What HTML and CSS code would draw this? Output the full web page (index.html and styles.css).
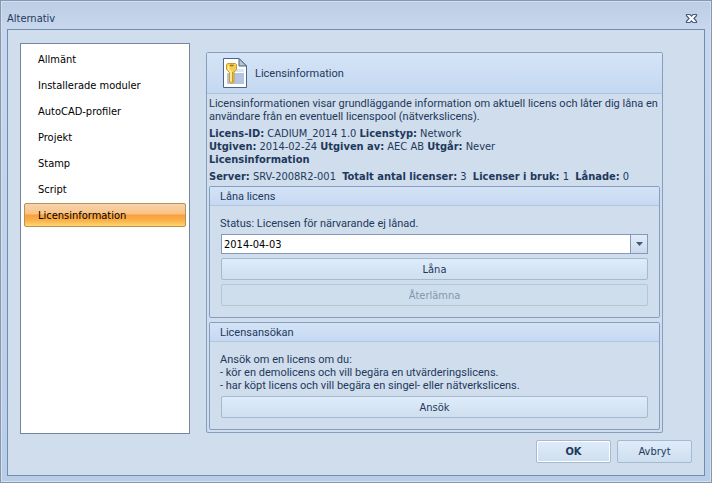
FILE: index.html
```html
<!DOCTYPE html>
<html lang="sv">
<head>
<meta charset="utf-8">
<title>Alternativ</title>
<link rel="stylesheet" href="styles.css">
</head>
<body>
<div class="window">
  <header class="titlebar">
    <h1 class="title">Alternativ</h1>
    <button class="close" type="button" aria-label="Stäng">
      <svg width="13" height="11" viewBox="0 0 13 11" aria-hidden="true">
        <path d="M1.500 1.500h3.500l1.500 1.700 1.500-1.700h3.500v1.200L8.900 5.500l2.600 2.800v1.200H8L6.500 7.800 5 9.500H1.500V8.300l2.600-2.800-2.600-2.800z" fill="#fff" stroke="#4a5c80" stroke-width="1.200"/>
      </svg>
    </button>
  </header>
  <main class="panel">
    <div class="columns">
      <nav class="sidebar">
        <a class="item" href="#allmant">Allmänt</a>
        <a class="item" href="#moduler">Installerade moduler</a>
        <a class="item" href="#profiler">AutoCAD-profiler</a>
        <a class="item" href="#projekt">Projekt</a>
        <a class="item" href="#stamp">Stamp</a>
        <a class="item" href="#script">Script</a>
        <a class="item selected" href="#licens" aria-current="page">Licensinformation</a>
      </nav>
      <section class="page" id="licens">
        <header class="page-head">
          <svg class="page-icon" width="26" height="32" viewBox="0 0 26 32" aria-hidden="true">
            <path d="M1.500 1.500H17L24.500 9v21.500h-23z" fill="#fff" stroke="#4d6487"/>
            <path d="M17 1.500V9h7.500z" fill="#b3c5de" stroke="#4d6487"/>
            <path d="M12 12h10v3H12z" fill="#dce6f3"/>
            <path d="M5 16h17v11H5z" fill="#b4c5e1"/>
            <path d="M4.500 7.500l1-1h8l1 1v5l-2.500 2.500v10l-2 1.500L7.500 25V15.500l-3-3z" fill="#f4cf4f" stroke="#c79a35"/>
            <path d="M6.500 9v3.500L9 15v9" fill="none" stroke="#fff0a4" stroke-width="1.500"/>
            <path d="M8 8.500h3.500" stroke="#8c702f" stroke-width="1.500"/>
            <path d="M10.500 15v10" stroke="#cb9633"/>
          </svg>
          <h2 class="page-title">Licensinformation</h2>
        </header>
        <div class="info">
          <p class="intro">Licensinformationen visar grundläggande information om aktuell licens och låter dig låna en användare från en eventuell licenspool (nätverkslicens).</p>
          <p><b>Licens-ID:</b> CADIUM_2014 1.0 <b>Licenstyp:</b> Network<br>
          <b>Utgiven:</b> 2014-02-24 <b>Utgiven av:</b> AEC AB <b>Utgår:</b> Never<br>
          <b>Licensinformation</b></p>
          <p><b>Server:</b> SRV-2008R2-001&nbsp; <b>Totalt antal licenser:</b> 3&nbsp; <b>Licenser i bruk:</b> 1&nbsp; <b>Lånade:</b> 0</p>
        </div>
        <section class="group">
          <h3 class="group-head">Låna licens</h3>
          <div class="group-body">
            <label class="status" for="datum">Status: Licensen för närvarande ej lånad.</label>
            <div class="date">
              <input class="date-input" id="datum" type="text" value="2014-04-03">
              <button class="date-drop" type="button" aria-label="Välj datum">
                <svg width="7" height="4" viewBox="0 0 7 4" aria-hidden="true"><path d="M0 0h7L3.500 4z" fill="#44577a"/></svg>
              </button>
            </div>
            <button class="button" type="button">Låna</button>
            <button class="button" type="button" disabled>Återlämna</button>
          </div>
        </section>
        <section class="group">
          <h3 class="group-head">Licensansökan</h3>
          <div class="group-body">
            <p class="request">Ansök om en licens om du:<br>- kör en demolicens och vill begära en utvärderingslicens.<br>- har köpt licens och vill begära en singel- eller nätverkslicens.</p>
            <button class="button" type="button">Ansök</button>
          </div>
        </section>
      </section>
    </div>
    <footer class="actions">
      <button class="button action primary" type="button">OK</button>
      <button class="button action" type="button">Avbryt</button>
    </footer>
  </main>
</div>
</body>
</html>
```
FILE: styles.css
```css
* {
  box-sizing: border-box;
}

body {
  margin: 0;
  color: #1e395b;
  font: 11px/13px "DejaVu Sans Condensed", "DejaVu Sans", sans-serif;
}

h1, h2, h3, p {
  margin: 0;
  font-size: inherit;
  font-weight: normal;
}

button, input {
  font: inherit;
  color: inherit;
}

.window {
  display: flex;
  flex-direction: column;
  min-height: 100vh;
  padding: 0 6px;
  border: 1px solid #8797ae;
  background: linear-gradient(#bccde5, #c8d7ec 28px, #bacde7);
  box-shadow: inset 0 0 0 1px #d3e0f1;
}

.titlebar {
  display: flex;
  align-items: center;
  justify-content: space-between;
  height: 28px;
  padding: 6px 7px 0 0;
}

.close {
  display: flex;
  padding: 0;
  border: 0;
  background: none;
}

.panel {
  flex: 1;
  display: flex;
  flex-direction: column;
  margin-bottom: 6px;
  padding: 13px 12px 12px;
  border: 1px solid #6f8db4;
  background: #cfdded;
}

.columns {
  flex: 1;
  display: flex;
  gap: 16px;
}

.sidebar {
  display: flex;
  flex-direction: column;
  gap: 2px;
  flex: none;
  width: 170px;
  padding: 3px;
  border: 1px solid #76859c;
  background: #fff;
}

.item {
  height: 24px;
  padding: 0 13px;
  border: 1px solid transparent;
  border-radius: 2px;
  color: #000;
  line-height: 24px;
  text-decoration: none;
}

.item.selected {
  border-color: #b5935b;
  background: linear-gradient(#f7d3ad, #f9c384 45%, #fa9f3c 50%, #fbb14b 75%, #fed76f);
}

.page {
  flex: 1;
  margin: 9px 29px 1px 0;
  padding-bottom: 2px;
  border: 1px solid #859ebf;
  border-radius: 2px;
}

.page-head {
  display: flex;
  align-items: center;
  gap: 7px;
  height: 41px;
  padding-left: 15px;
  border-bottom: 1px solid #abc3e0;
  background: linear-gradient(#d5e4f6, #c4d8f1);
}

.page-title,
.intro,
.group-head,
.status,
.request {
  font-family: Roboto, sans-serif;
}

.info {
  display: flex;
  flex-direction: column;
  gap: 4px;
  padding: 3px 1px 3px 2px;
}

.group {
  margin: 0 2px 4px;
  border: 1px solid #859ebf;
  border-radius: 2px;
}

.group:last-child {
  margin-bottom: 0;
}

.group-head {
  height: 19px;
  padding-left: 10px;
  border-bottom: 1px solid #b1c6e1;
  background: linear-gradient(#d4e3f6, #c6d9f2);
  line-height: 19px;
}

.group-body {
  display: flex;
  flex-direction: column;
  gap: 4px;
  padding: 11px;
}

.status,
.request {
  margin-left: -1px;
}

.date {
  display: flex;
  height: 20px;
  border: 1px solid #8399b9;
  background: #fff;
}

.date-input {
  flex: 1;
  min-width: 0;
  padding: 0 2px;
  border: 0;
  background: none;
  color: #000;
}

.date-drop {
  display: flex;
  align-items: center;
  justify-content: center;
  width: 17px;
  padding: 0;
  border: 0;
  border-left: 1px solid #8399b9;
  background: linear-gradient(#e2ecf8, #cbdaec);
}

.button {
  height: 22px;
  padding: 0;
  border: 1px solid #a5b9d1;
  border-radius: 2px;
  background: linear-gradient(#deebfb, #cfdfee);
}

.button:disabled {
  border-color: #b4c6da;
  background: #cedeed;
  color: #8496ac;
}

.actions {
  display: flex;
  justify-content: flex-end;
  gap: 6px;
  padding-top: 6px;
}

.action {
  width: 75px;
  height: 23px;
}

.primary {
  box-shadow: inset 0 0 0 1px #fff;
  font-weight: bold;
}
```
